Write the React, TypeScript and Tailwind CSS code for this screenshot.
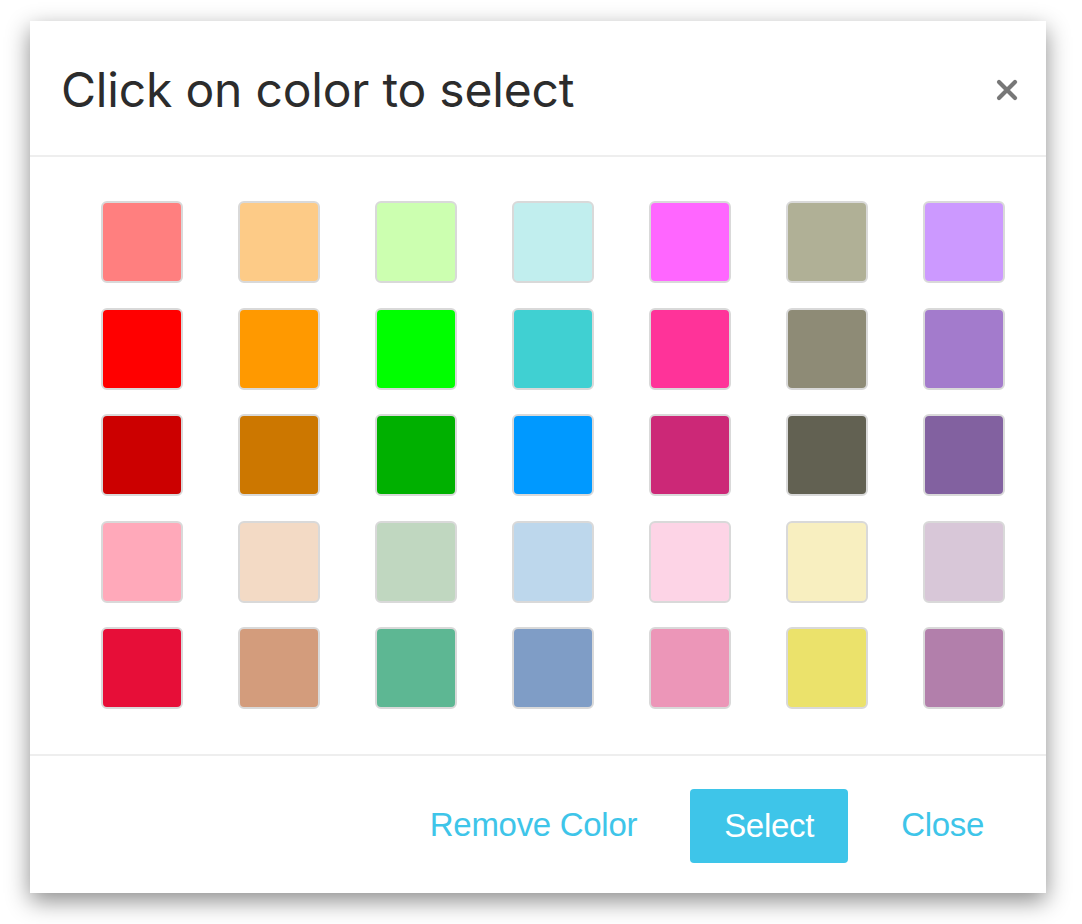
import React from 'react';

const colors: string[][] = [
  ['#ff7f7f', '#fdcb87', '#ccffb0', '#c1eeee', '#ff66ff', '#b0b096', '#cc99ff'],
  ['#ff0000', '#ff9900', '#00ff00', '#40d0d2', '#ff3399', '#8e8b76', '#a37bcc'],
  ['#cc0000', '#cc7700', '#00b000', '#0099ff', '#cc2877', '#626152', '#8261a0'],
  ['#ffa9ba', '#f3dac5', '#c0d7c0', '#bdd7ec', '#fdd4e6', '#f8efc0', '#d8c7d8'],
  ['#e70e38', '#d39c7c', '#5db793', '#7f9dc6', '#ec96b8', '#ebe26b', '#b27fab'],
];

const CloseIcon: React.FC = () => (
  <svg width="22" height="22" viewBox="0 0 22 22" fill="none">
    <path d="M3 3 L19 19 M19 3 L3 19" stroke="#777777" strokeWidth="4.2" strokeLinecap="round" />
  </svg>
);

const App: React.FC = () => {
  return (
    <div className="w-[1082px] h-[924px] bg-white pt-[21px] pl-[30px]">
      <div className="w-[1016px] h-[872px] bg-white flex flex-col shadow-[0_8px_22px_rgba(0,0,0,0.45)]">
        <div className="h-[136px] flex items-center justify-between pl-[31px] pr-[28px] border-b-2 border-[#eeeeee] shrink-0">
          <h2 className="text-[48px] text-[#2c2c2c] font-['Inter',sans-serif] font-normal tracking-[-0.2px] pt-[3px]">
            Click on color to select
          </h2>
          <button className="w-[22px] h-[22px] flex items-center justify-center mt-[3px]">
            <CloseIcon />
          </button>
        </div>

        <div className="flex-1 pl-[71px] pt-[44px]">
          <div className="grid grid-cols-[repeat(7,82px)] gap-x-[55px] gap-y-[24.5px]">
            {colors.flat().map((c, i) => (
              <div
                key={i}
                className="w-[82px] h-[82px] rounded-[6px] border-2 border-[#d9d9d9]"
                style={{ backgroundColor: c }}
              />
            ))}
          </div>
        </div>

        <div className="h-[139px] border-t-2 border-[#eeeeee] flex items-center justify-end pr-[62px] shrink-0 font-['Liberation_Sans',Arial,sans-serif]">
          <button className="text-[33px] text-[#3ec5e9] tracking-[-0.3px]">Remove Color</button>
          <button className="ml-[53px] w-[158px] h-[74px] rounded-[4px] bg-[#3ec5e9] text-white text-[33px] tracking-[-0.3px] mt-[3px]">
            Select
          </button>
          <button className="ml-[53px] text-[33px] text-[#3ec5e9] tracking-[-0.3px]">Close</button>
        </div>
      </div>
    </div>
  );
};

export default App;
